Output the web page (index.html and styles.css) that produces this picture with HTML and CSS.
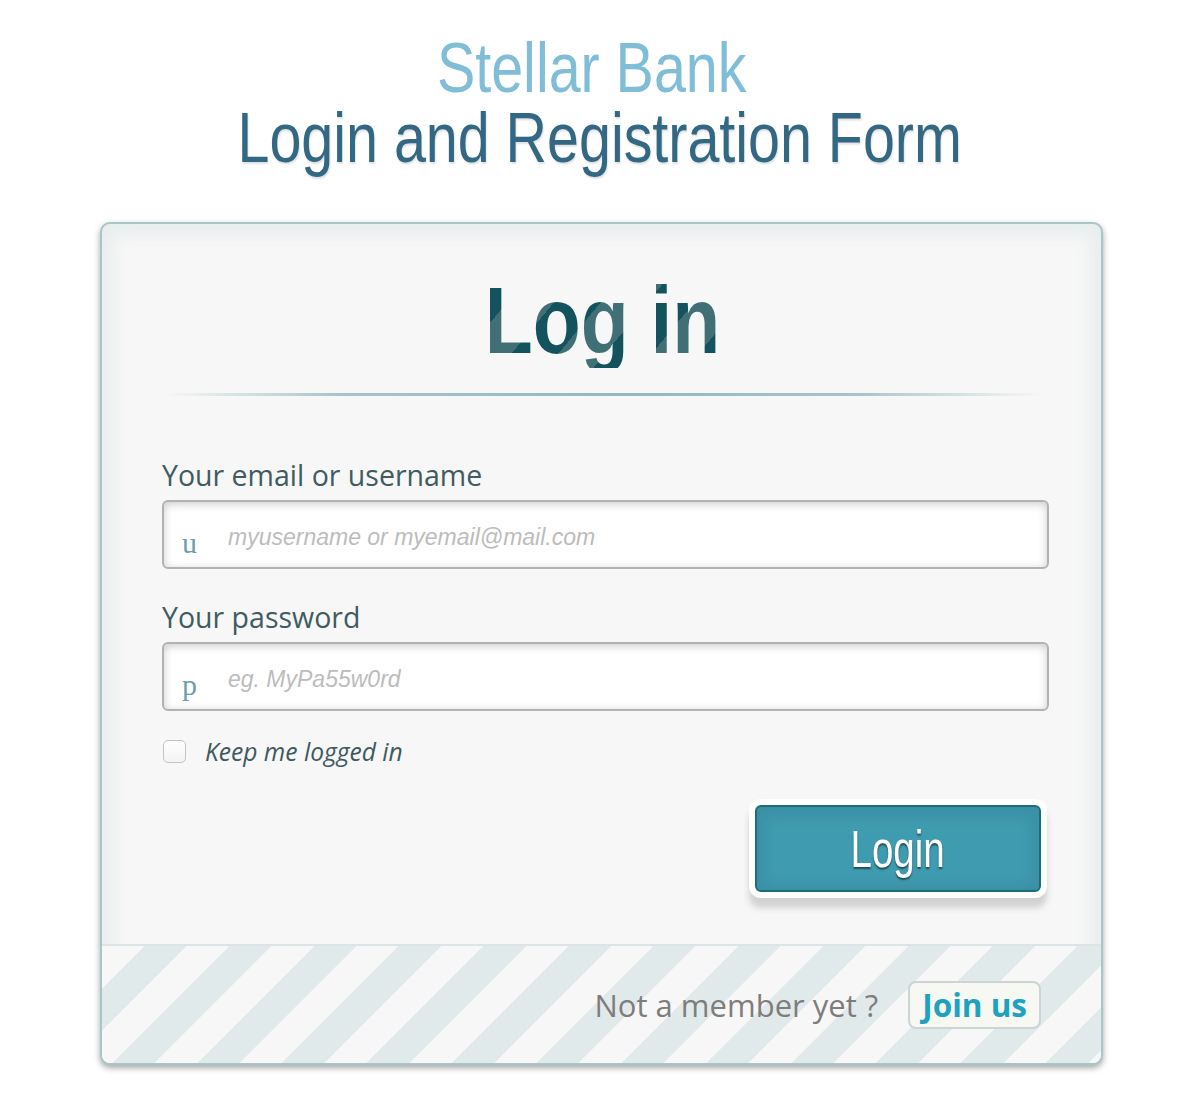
FILE: index.html
```html
<!DOCTYPE html>
<html lang="en">
<head>
<meta charset="utf-8">
<title>Stellar Bank - Login and Registration Form</title>
<link rel="stylesheet" href="styles.css">
</head>
<body>
<header class="page-header">
  <div class="brand"><span class="narrow">Stellar Bank</span></div>
  <div class="subtitle"><span class="narrow">Login and Registration Form</span></div>
</header>
<div class="card">
  <form class="login-form">
    <h1 class="heading"><span class="heading-text">Log in</span></h1>
    <div class="divider"></div>
    <label class="field-label first">Your email or username</label>
    <div class="input-wrap">
      <span class="icon">u</span>
      <input class="text-input" type="text" placeholder="myusername or myemail@mail.com">
    </div>
    <label class="field-label">Your password</label>
    <div class="input-wrap">
      <span class="icon">p</span>
      <input class="text-input" type="password" placeholder="eg. MyPa55w0rd">
    </div>
    <div class="keep">
      <span class="checkbox"></span>
      <span class="keep-label">Keep me logged in</span>
    </div>
    <div class="actions">
      <button type="button" class="btn-login"><span class="btn-text">Login</span></button>
    </div>
  </form>
  <div class="footer">
    <span class="footer-text">Not a member yet ?</span>
    <a class="join" href="#">Join us</a>
  </div>
</div>
</body>
</html>
```
FILE: styles.css
```css
html, body {
  margin: 0;
  padding: 0;
  background: #ffffff;
}
body {
  font-family: "Open Sans", Lato, sans-serif;
}
.page-header {
  padding-top: 33px;
  text-align: center;
  font-family: "Liberation Sans", Arial, sans-serif;
  font-size: 70px;
  line-height: 70px;
}
.narrow {
  display: inline-block;
  transform: scaleX(0.82);
}
.brand {
  color: #80bdd6;
  text-shadow: 0 1px 1px rgba(255,255,255,0.8);
}
.subtitle {
  color: #336885;
  padding-left: 16px;
  text-shadow: 1px 2px 2px rgba(0,0,0,0.12);
}
.card {
  margin: 49px 0 40px 100px;
  width: 1003px;
  box-sizing: border-box;
  background: #f7f7f7;
  border: 2px solid rgba(147,184,189,0.8);
  border-radius: 10px;
  box-shadow: 0 3px 6px rgba(105,108,109,0.6), inset 0 0 16px 10px rgba(208,223,226,0.4);
  overflow: hidden;
}
.login-form {
  padding: 49px 52px 52px 60px;
  margin: 0;
}
.heading {
  margin: 0;
  height: 95px;
  font-family: "Liberation Sans", Arial, sans-serif;
  font-weight: bold;
  font-size: 95px;
  line-height: 95px;
  text-align: center;
  padding-right: 6px;
}
.heading-text {
  display: inline-block;
  transform: scaleX(0.827);
  background: repeating-linear-gradient(135deg, #12535d 0, #12535d 40px, #406f76 40px, #406f76 80px);
  -webkit-background-clip: text;
  background-clip: text;
  -webkit-text-fill-color: transparent;
  color: transparent;
}
.divider {
  margin: 25px 8px 0 3px;
  height: 3px;
  background: linear-gradient(to right, rgba(147,184,189,0) 0%, rgba(147,184,189,0.8) 20%, rgba(147,184,189,1) 53%, rgba(147,184,189,0.8) 79%, rgba(147,184,189,0) 100%);
}
.field-label {
  display: block;
  margin: 31px 0 8px;
  color: #405c60;
  font-size: 28.5px;
  line-height: 34px;
}
.field-label.first {
  margin-top: 62px;
}
.input-wrap {
  position: relative;
}
.icon {
  position: absolute;
  left: 20px;
  top: 28px;
  font-family: "Liberation Serif", serif;
  font-size: 30px;
  line-height: 30px;
  color: #6a9fab;
  pointer-events: none;
}
.text-input {
  display: block;
  width: 100%;
  height: 69px;
  box-sizing: border-box;
  margin: 0;
  padding: 6px 10px 0 64px;
  border: 2px solid #b2b2b2;
  border-radius: 6px;
  background: #ffffff;
  box-shadow: inset 0 2px 8px rgba(168,168,168,0.6);
  font-family: "Liberation Sans", Arial, sans-serif;
  font-size: 23px;
  color: #444;
  outline: none;
}
.text-input::placeholder {
  color: #bcbcbc;
  font-style: italic;
}
.keep {
  display: flex;
  align-items: center;
  margin-top: 29px;
  height: 23px;
  padding-left: 1px;
}
.checkbox {
  width: 23px;
  height: 23px;
  box-sizing: border-box;
  border: 1px solid #c4c4c4;
  border-radius: 5px;
  background: linear-gradient(#ffffff, #f3f3f3);
  margin-right: 19px;
}
.keep-label {
  font-style: italic;
  font-size: 24.6px;
  line-height: 23px;
  color: #3e5a5f;
}
.actions {
  display: flex;
  justify-content: flex-end;
  margin-top: 42px;
  padding-right: 8px;
}
.btn-login {
  width: 286px;
  height: 87px;
  box-sizing: border-box;
  background: #3f9bb0;
  border: 2px solid #1c6c7a;
  border-radius: 6px;
  box-shadow: inset 0 2px 12px 8px rgba(0,0,0,0.07), 0 0 0 6px #fefefe, 0 10px 6px 6px #d2d2d2;
  color: #ffffff;
  font-family: "Liberation Sans", Arial, sans-serif;
  font-size: 52px;
  line-height: 52px;
  text-shadow: 0 2px 2px rgba(0,0,0,0.5);
  padding: 0;
  cursor: pointer;
}
.btn-text {
  display: inline-block;
  transform: scaleX(0.74);
}
.footer {
  display: flex;
  align-items: center;
  justify-content: flex-end;
  height: 117px;
  padding-right: 60px;
  border-top: 2px solid #dbe5e8;
  background: repeating-linear-gradient(135deg, #f7f7f7 0, #f7f7f7 30px, #e1eaeb 30px, #e1eaeb 60px);
}
.footer-text {
  color: #7f7c7c;
  font-size: 31px;
  line-height: 36px;
}
.join {
  margin-left: 30px;
  display: inline-block;
  padding: 2px 12px;
  height: 48px;
  box-sizing: border-box;
  background: #f7f8f1;
  border: 2px solid #cbd5d6;
  border-radius: 8px;
  color: #1da2c1;
  font-weight: bold;
  font-size: 31.5px;
  line-height: 40px;
  text-decoration: none;
}
```
